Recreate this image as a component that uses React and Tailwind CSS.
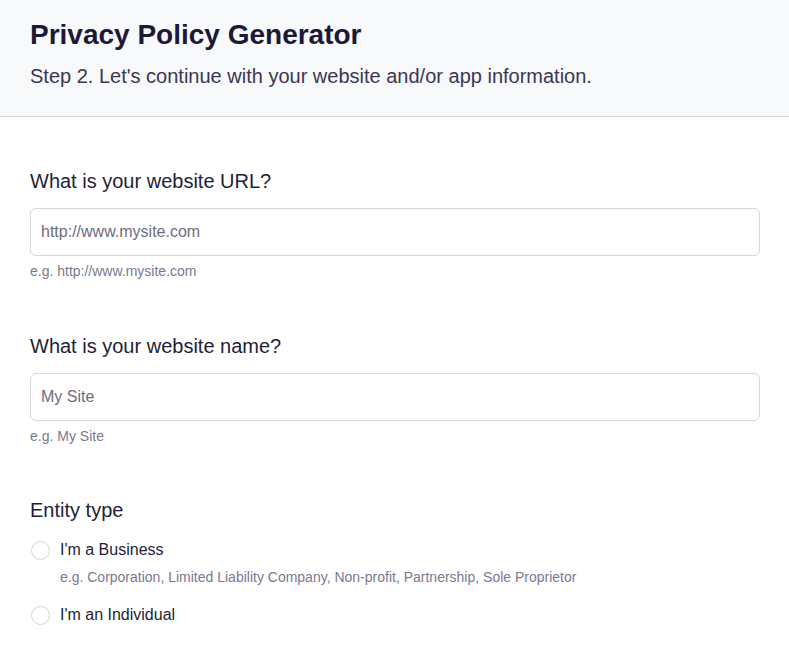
export default function App() {
  const font = { fontFamily: '"Liberation Sans", Arial, sans-serif' };
  return (
    <div className="min-h-screen bg-white" style={font}>
      <div className="bg-[#f8f9fb] border-b border-[#d3d3d8] px-[30px] pt-[19px] pb-[27px]">
        <h1 className="text-[28px] leading-[32px] font-bold text-[#1d1838]">Privacy Policy Generator</h1>
        <p className="mt-[12px] text-[20px] leading-[26px] text-[#3b3652]">Step 2. Let's continue with your website and/or app information.</p>
      </div>
      <div className="pl-[30px] pr-[29px]">
        <div className="mt-[51px] text-[20px] leading-[26px] text-[#221e36]">What is your website URL?</div>
        <input
          className="mt-[14px] block w-full h-[48px] rounded-[6px] border border-[#d6d6d9] bg-white px-[10px] text-[16px] text-[#221e36] placeholder:text-[#6e6c7c] outline-none"
          placeholder="http://www.mysite.com"
        />
        <div className="mt-[6px] text-[14px] leading-[18px] text-[#7b7891]">e.g. http://www.mysite.com</div>

        <div className="mt-[53px] text-[20px] leading-[26px] text-[#221e36]">What is your website name?</div>
        <input
          className="mt-[14px] block w-full h-[48px] rounded-[6px] border border-[#d6d6d9] bg-white px-[10px] text-[16px] text-[#221e36] placeholder:text-[#6e6c7c] outline-none"
          placeholder="My Site"
        />
        <div className="mt-[6px] text-[14px] leading-[18px] text-[#7b7891]">e.g. My Site</div>

        <div className="mt-[52px] text-[20px] leading-[26px] text-[#221e36]">Entity type</div>
        <label className="mt-[16px] flex items-center">
          <span className="ml-[1px] w-[19px] h-[19px] rounded-full border border-[#d6d6d9] bg-white shrink-0" />
          <span className="ml-[10px] text-[16px] leading-[22px] text-[#221e36]">I'm a Business</span>
        </label>
        <div className="mt-[7px] ml-[30px] text-[14px] leading-[18px] text-[#7b7891]">
          e.g. Corporation, Limited Liability Company, Non-profit, Partnership, Sole Proprietor
        </div>
        <label className="mt-[18px] flex items-center">
          <span className="ml-[1px] w-[19px] h-[19px] rounded-full border border-[#d6d6d9] bg-white shrink-0" />
          <span className="ml-[10px] text-[16px] leading-[22px] text-[#221e36]">I'm an Individual</span>
        </label>
      </div>
    </div>
  );
}
